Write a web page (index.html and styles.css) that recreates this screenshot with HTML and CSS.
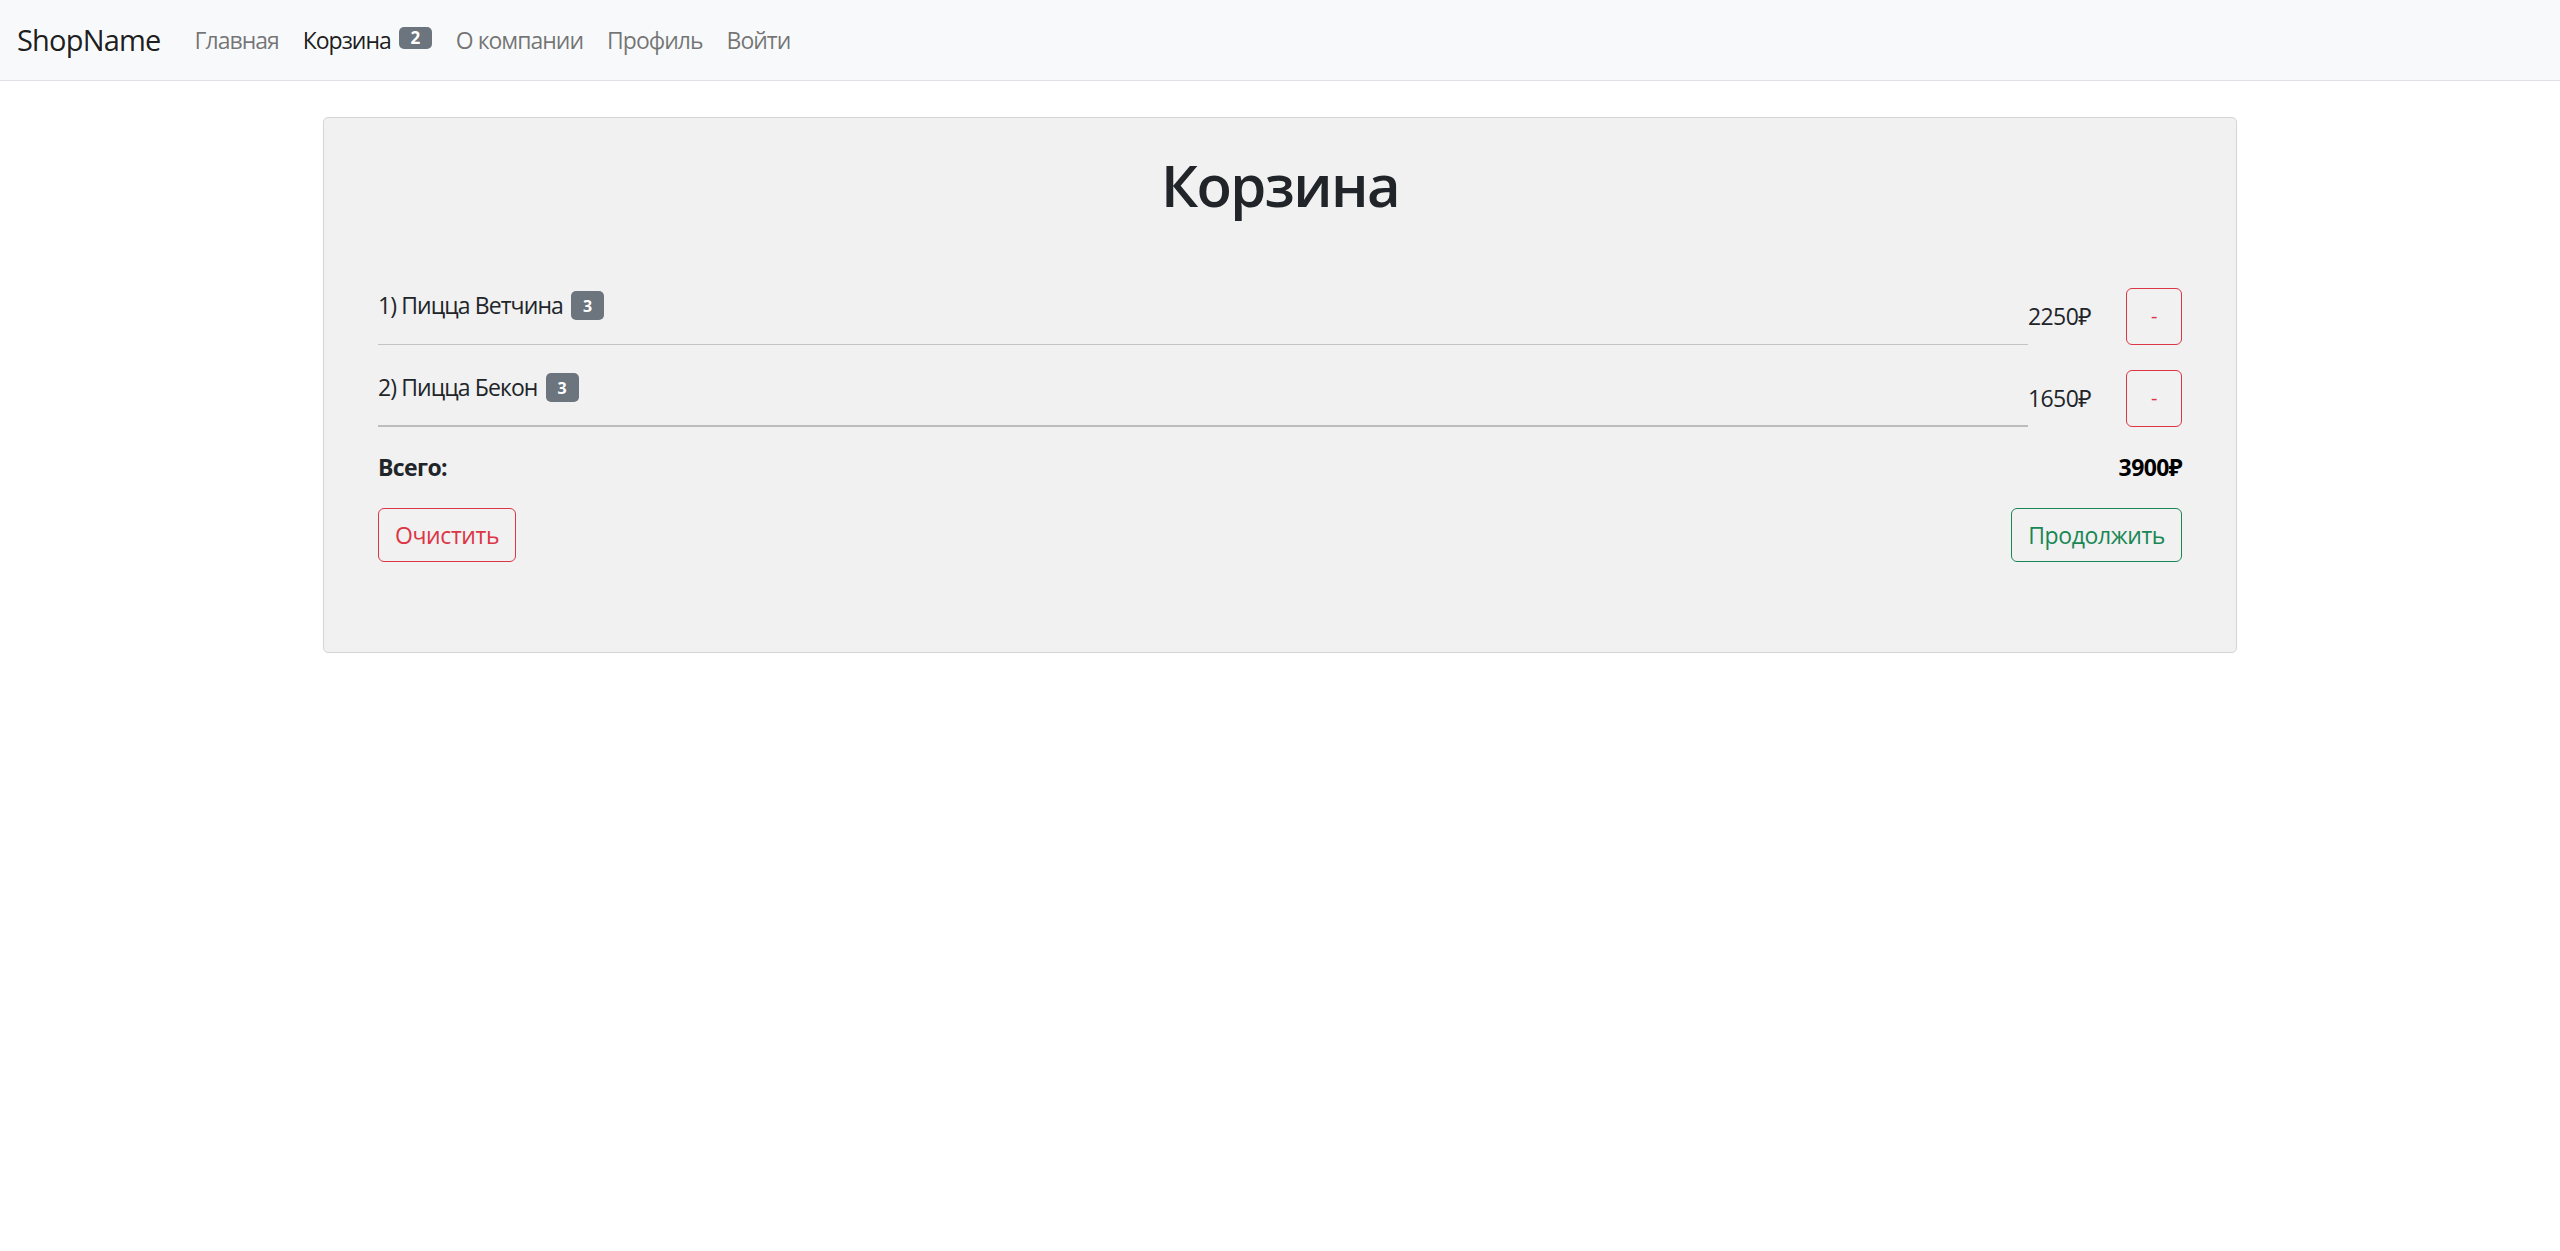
FILE: index.html
```html
<!DOCTYPE html>
<html lang="ru">
<head>
<meta charset="utf-8">
<title>Корзина</title>
<link rel="stylesheet" href="styles.css">
</head>
<body>
<nav class="navbar">
  <a class="brand" href="#">ShopName</a>
  <ul class="nav">
    <li><a class="nav-link" href="#">Главная</a></li>
    <li><a class="nav-link active" href="#">Корзина <span class="nav-badge">2</span></a></li>
    <li><a class="nav-link" href="#">О компании</a></li>
    <li><a class="nav-link" href="#">Профиль</a></li>
    <li><a class="nav-link" href="#">Войти</a></li>
  </ul>
</nav>
<main class="container">
  <section class="card">
    <h1 class="title">Корзина</h1>
    <div class="cart-list">
      <div class="cart-row">
        <div class="item">
          <div class="item-title"><span>1) Пицца Ветчина</span><span class="badge">3</span></div>
        </div>
        <div class="price">2250₽</div>
        <button class="btn btn-danger btn-minus">-</button>
      </div>
      <div class="cart-row">
        <div class="item item-last">
          <div class="item-title"><span>2) Пицца Бекон</span><span class="badge">3</span></div>
        </div>
        <div class="price">1650₽</div>
        <button class="btn btn-danger btn-minus">-</button>
      </div>
    </div>
    <div class="total">
      <span>Всего:</span>
      <span class="total-sum">3900₽</span>
    </div>
    <div class="actions">
      <button class="btn btn-danger">Очистить</button>
      <button class="btn btn-success">Продолжить</button>
    </div>
  </section>
</main>
</body>
</html>
```
FILE: styles.css
```css
* { box-sizing: border-box; }
body {
  margin: 0;
  font-family: "Open Sans", "Noto Sans", sans-serif;
  font-size: 23px;
  line-height: 1.5;
  color: #212529;
  background: #fff;
}
.navbar {
  display: flex;
  align-items: center;
  height: 81px;
  padding: 0 0 0 17px;
  background: #f8f9fa;
  border-bottom: 1px solid #dee2e6;
}
.brand {
  font-size: 29px;
  color: rgba(0,0,0,.9);
  text-decoration: none;
  margin-right: 22px;
  letter-spacing: -0.8px;
}
.nav {
  display: flex;
  list-style: none;
  margin: 0;
  padding: 0;
}
.nav-link {
  display: inline-flex;
  align-items: center;
  gap: 8px;
  padding: 0 12px;
  color: rgba(0,0,0,.55);
  text-decoration: none;
  letter-spacing: -1px;
}
.nav-link.active { color: rgba(0,0,0,.9); }
.nav-badge {
  display: inline-flex;
  align-items: center;
  justify-content: center;
  width: 33px;
  height: 22px;
  margin-bottom: 4px;
  border-radius: 5px;
  background: #6c757d;
  color: #fff;
  font-size: 17px;
  font-weight: 700;
  letter-spacing: 0;
}
.container {
  width: 1914px;
  margin: 36px auto 0;
}
.card {
  background: #f1f1f1;
  border: 1px solid #d4d4d4;
  border-radius: 5px;
  padding: 32px 54px 90px;
}
.title {
  margin: 0 0 67px;
  font-size: 58px;
  font-weight: 600;
  line-height: 70px;
  text-align: center;
  letter-spacing: -1.6px;
}
.cart-list {
  display: flex;
  flex-direction: column;
  gap: 24px;
}
.cart-row {
  display: flex;
  align-items: center;
}
.item {
  flex: 1;
  padding: 1px 0 21px;
  border-bottom: 1px solid #c4c4c4;
}
.item-last {
  padding-bottom: 20px;
  border-bottom: 2px solid #bdbdbd;
}
.item-title {
  display: flex;
  align-items: center;
  gap: 8px;
  height: 35px;
  letter-spacing: -0.9px;
}
.badge {
  display: inline-flex;
  align-items: center;
  justify-content: center;
  width: 33px;
  height: 29px;
  border-radius: 5px;
  background: #6c757d;
  color: #fff;
  font-size: 16px;
  font-weight: 700;
  letter-spacing: 0;
}
.price {
  width: 98px;
  letter-spacing: -0.6px;
}
.btn {
  font-family: inherit;
  font-size: 23px;
  line-height: 1.5;
  background: transparent;
  border: 1px solid;
  border-radius: 6px;
  height: 54px;
  padding: 0 16px;
  cursor: pointer;
  letter-spacing: -0.4px;
}
.btn-danger { color: #dc3545; border-color: #dc3545; }
.btn-success { color: #198754; border-color: #198754; }
.btn-minus {
  width: 56px;
  height: 57px;
  padding: 0;
  font-size: 20px;
}
.total {
  display: flex;
  justify-content: space-between;
  margin-top: 23px;
  font-weight: 700;
  line-height: 35px;
  letter-spacing: -0.6px;
}
.total-sum { color: #000; }
.actions {
  display: flex;
  justify-content: space-between;
  margin-top: 23px;
}
```
